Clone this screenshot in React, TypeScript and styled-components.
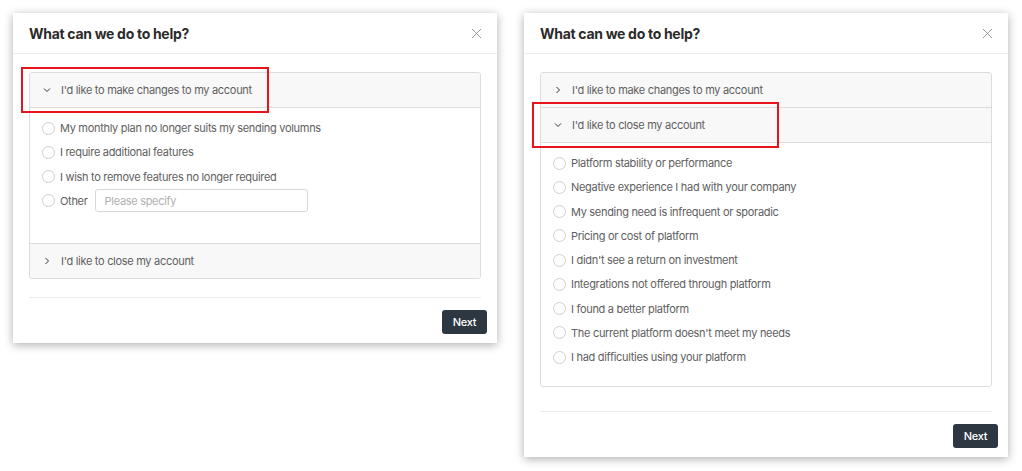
import React from "react";
import styled, { createGlobalStyle } from "styled-components";

const Global = createGlobalStyle`
  html, body { margin: 0; padding: 0; background: #fff; }
  body { font-family: "Inter", "Lato", "Noto Sans", sans-serif; -webkit-font-smoothing: antialiased; }
  * { box-sizing: border-box; }
`;

const Page = styled.main`
  display: flex;
  align-items: flex-start;
  gap: 27px;
  padding: 13px;
`;

const Dialog = styled.section`
  position: relative;
  width: 484px;
  background: #fff;
  box-shadow: 0 2px 9px rgba(0, 0, 0, 0.32);
`;

const Header = styled.header`
  height: 41px;
  display: flex;
  align-items: center;
  justify-content: space-between;
  padding: 0 15px 0 16px;
  border-bottom: 1px solid #ececec;
`;

const Title = styled.h2`
  margin: 0;
  font-size: 14px;
  font-weight: 700;
  color: #2b2b2b;
  letter-spacing: -0.3px;
`;

const CloseButton = styled.button`
  width: 12px;
  height: 12px;
  padding: 0;
  border: 0;
  background: none;
  display: flex;
  align-items: center;
  justify-content: center;
  cursor: pointer;
`;

const Body = styled.div`
  padding: 18px 16px 0;
`;

const Accordion = styled.div`
  border: 1px solid #dcdcdc;
  border-radius: 3px;
  overflow: hidden;
`;

const Item = styled.div`
  & + & {
    border-top: 1px solid #dcdcdc;
  }
`;

const ItemHeader = styled.div`
  height: 34px;
  display: flex;
  align-items: center;
  gap: 9px;
  padding-left: 12px;
  background: #f8f8f8;
  font-size: 11px;
  letter-spacing: -0.3px;
  color: #606060;
`;

const Content = styled.div<{ $padBottom: number }>`
  border-top: 1px solid #dcdcdc;
  padding: 8px 12px ${(p) => p.$padBottom}px;
  background: #fff;
`;

const Row = styled.label`
  height: 24.25px;
  display: flex;
  align-items: center;
  gap: 5px;
  font-size: 11px;
  letter-spacing: -0.3px;
  color: #606060;
`;

const Radio = styled.span`
  width: 13px;
  height: 13px;
  border: 1px solid #cfcfcf;
  border-radius: 50%;
  flex: none;
`;

const OtherInput = styled.input`
  margin-left: 2px;
  width: 213px;
  height: 23px;
  border: 1px solid #d8d8d8;
  border-radius: 3px;
  padding: 0 9px;
  font-family: inherit;
  font-size: 11px;
  letter-spacing: -0.3px;
  color: #555;
  outline: none;
  &::placeholder {
    color: #b0b0b0;
  }
`;

const Footer = styled.footer<{ $gap: number }>`
  margin: ${(p) => p.$gap}px 16px 0;
  border-top: 1px solid #ececec;
  padding: 12px 0 9px;
  display: flex;
  justify-content: flex-end;
`;

const NextButton = styled.button`
  width: 45px;
  height: 24px;
  margin-right: -6px;
  border: 0;
  border-radius: 3px;
  background: #2d3741;
  color: #fff;
  font-family: inherit;
  font-size: 11px;
  font-weight: 500;
  letter-spacing: -0.3px;
  cursor: pointer;
`;

const Highlight = styled.div<{ $top: number; $width: number }>`
  position: absolute;
  left: 8px;
  top: ${(p) => p.$top}px;
  width: ${(p) => p.$width}px;
  height: 46px;
  border: 2px solid #e8141b;
  pointer-events: none;
`;

const Chevron = ({ open }: { open: boolean }) => (
  <svg width="10" height="10" viewBox="0 0 10 10" style={{ flex: "none" }}>
    {open ? (
      <polyline points="2,3.5 5,6.5 8,3.5" fill="none" stroke="#333" strokeWidth="1" />
    ) : (
      <polyline points="3.5,2 6.5,5 3.5,8" fill="none" stroke="#333" strokeWidth="1" />
    )}
  </svg>
);

const CloseIcon = () => (
  <svg width="11" height="11" viewBox="0 0 11 11">
    <path d="M1 1 L10 10 M10 1 L1 10" stroke="#9a9a9a" strokeWidth="1" fill="none" />
  </svg>
);

const changeReasons = [
  "My monthly plan no longer suits my sending volumns",
  "I require additional features",
  "I wish to remove features no longer required",
];

const closeReasons = [
  "Platform stability or performance",
  "Negative experience I had with your company",
  "My sending need is infrequent or sporadic",
  "Pricing or cost of platform",
  "I didn't see a return on investment",
  "Integrations not offered through platform",
  "I found a better platform",
  "The current platform doesn't meet my needs",
  "I had difficulties using your platform",
];

const ModalHeader = () => (
  <Header>
    <Title>What can we do to help?</Title>
    <CloseButton aria-label="Close">
      <CloseIcon />
    </CloseButton>
  </Header>
);

export default function App() {
  return (
    <>
      <Global />
      <Page>
        <Dialog>
          <ModalHeader />
          <Body>
            <Accordion>
              <Item>
                <ItemHeader>
                  <Chevron open />
                  I'd like to make changes to my account
                </ItemHeader>
                <Content $padBottom={30}>
                  {changeReasons.map((r) => (
                    <Row key={r}>
                      <Radio />
                      {r}
                    </Row>
                  ))}
                  <Row>
                    <Radio />
                    Other
                    <OtherInput placeholder="Please specify" />
                  </Row>
                </Content>
              </Item>
              <Item>
                <ItemHeader>
                  <Chevron open={false} />
                  I'd like to close my account
                </ItemHeader>
              </Item>
            </Accordion>
          </Body>
          <Footer $gap={18}>
            <NextButton>Next</NextButton>
          </Footer>
          <Highlight $top={54} $width={248} />
        </Dialog>

        <Dialog>
          <ModalHeader />
          <Body>
            <Accordion>
              <Item>
                <ItemHeader>
                  <Chevron open={false} />
                  I'd like to make changes to my account
                </ItemHeader>
              </Item>
              <Item>
                <ItemHeader>
                  <Chevron open />
                  I'd like to close my account
                </ItemHeader>
                <Content $padBottom={17}>
                  {closeReasons.map((r) => (
                    <Row key={r}>
                      <Radio />
                      {r}
                    </Row>
                  ))}
                </Content>
              </Item>
            </Accordion>
          </Body>
          <Footer $gap={24}>
            <NextButton>Next</NextButton>
          </Footer>
          <Highlight $top={89} $width={247} />
        </Dialog>
      </Page>
    </>
  );
}
